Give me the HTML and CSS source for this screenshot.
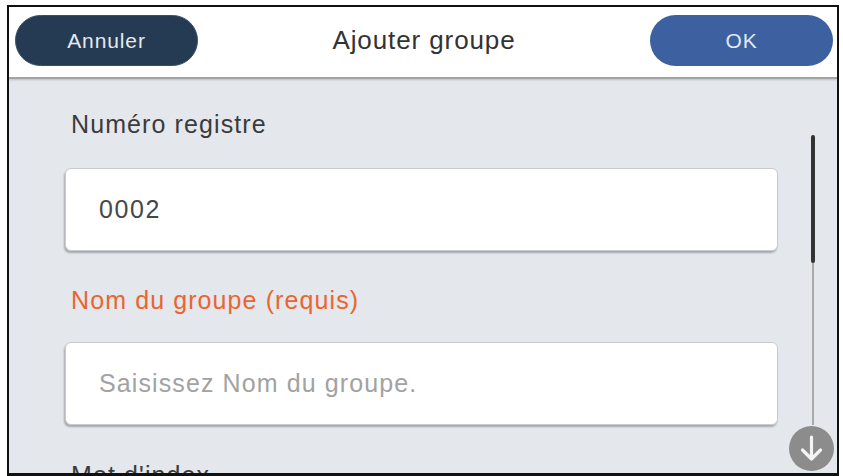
FILE: index.html
```html
<!DOCTYPE html>
<html lang="fr">
<head>
<meta charset="utf-8">
<title>Ajouter groupe</title>
<link rel="stylesheet" href="styles.css">
</head>
<body>
<div class="frame">
  <header class="topbar">
    <button class="btn btn-cancel">Annuler</button>
    <div class="title">Ajouter groupe</div>
    <button class="btn btn-ok">OK</button>
  </header>
  <main class="content">
    <div class="form">
      <div class="label">Numéro registre</div>
      <div class="field"><span class="value">0002</span></div>
      <div class="label label-required">Nom du groupe (requis)</div>
      <div class="field"><span class="placeholder">Saisissez Nom du groupe.</span></div>
      <div class="label label-last">Mot d'index</div>
    </div>
    <div class="scroll-track"><div class="scroll-thumb"></div></div>
    <div class="scroll-down">
      <svg width="45" height="45" viewBox="0 0 45 45">
        <circle cx="22.5" cy="22.5" r="22.5" fill="#8c8c8c"/>
        <path d="M22.5 11 V33 M13.5 24 L22.5 33 L31.5 24" fill="none" stroke="#f4f4f4" stroke-width="3.2" stroke-linecap="round" stroke-linejoin="round"/>
      </svg>
    </div>
  </main>
</div>
</body>
</html>
```
FILE: styles.css
```css
* { box-sizing: border-box; }
html, body { margin: 0; padding: 0; }
body {
  background: #ffffff;
  width: 843px;
  height: 476px;
  overflow: hidden;
  font-family: "Liberation Sans", Arial, Helvetica, sans-serif;
}
.frame {
  margin: 5px 0 0 7px;
  width: 832px;
  height: 471px;
  border: 2px solid #111;
  border-bottom-width: 3px;
  display: flex;
  flex-direction: column;
  overflow: hidden;
  background: #e4e8ec;
}
.topbar {
  flex: 0 0 auto;
  height: 72px;
  background: #fff;
  border-bottom: 2px solid #a3a3a3;
  box-shadow: 0 1px 2px rgba(0,0,0,0.18);
  display: flex;
  align-items: flex-start;
  justify-content: space-between;
  padding: 8px 4px 0 6px;
  position: relative;
  z-index: 1;
}
.btn {
  width: 183px;
  height: 51px;
  border-radius: 26px;
  border: none;
  font-family: "Liberation Sans", Arial, sans-serif;
  font-size: 21px;
  letter-spacing: 0.9px;
  padding: 0;
}
.btn-cancel {
  background: #253b53;
  color: #e6e9ec;
  border: 1px solid #3a4f66;
}
.btn-ok {
  background: #3c60a0;
  color: #e3e9f2;
}
.title {
  font-size: 26px;
  letter-spacing: 0.9px;
  color: #333;
  line-height: 30px;
  padding-top: 10px;
}
.content {
  flex: 1 1 auto;
  position: relative;
  padding-left: 56px;
}
.form {
  width: 713px;
}
.label {
  font-size: 25px;
  letter-spacing: 1.1px;
  line-height: 30px;
  color: #3b3b3b;
  padding: 30px 0 29px 6px;
}
.label-required { color: #ea6530; padding-top: 34px; padding-bottom: 27px; }
.label-last { padding-top: 35px; }
.field {
  height: 83px;
  background: #fff;
  border: 1px solid #c9cbce;
  border-radius: 6px;
  box-shadow: -1px 2px 2px rgba(0,0,0,0.28);
  display: flex;
  align-items: center;
  padding-left: 33px;
  font-size: 25px;
  letter-spacing: 1.1px;
}
.value { color: #474747; letter-spacing: 1.6px; }
.placeholder { color: #a2a2a2; }
.scroll-track {
  position: absolute;
  left: 803px;
  top: 56px;
  width: 2px;
  height: 290px;
  background: #a9a9a9;
}
.scroll-thumb {
  position: absolute;
  left: -1px;
  top: 0;
  width: 4px;
  height: 128px;
  border-radius: 2px;
  background: #333;
}
.scroll-down {
  position: absolute;
  left: 780px;
  top: 347px;
  width: 45px;
  height: 45px;
}
.scroll-down svg { display: block; }
```
